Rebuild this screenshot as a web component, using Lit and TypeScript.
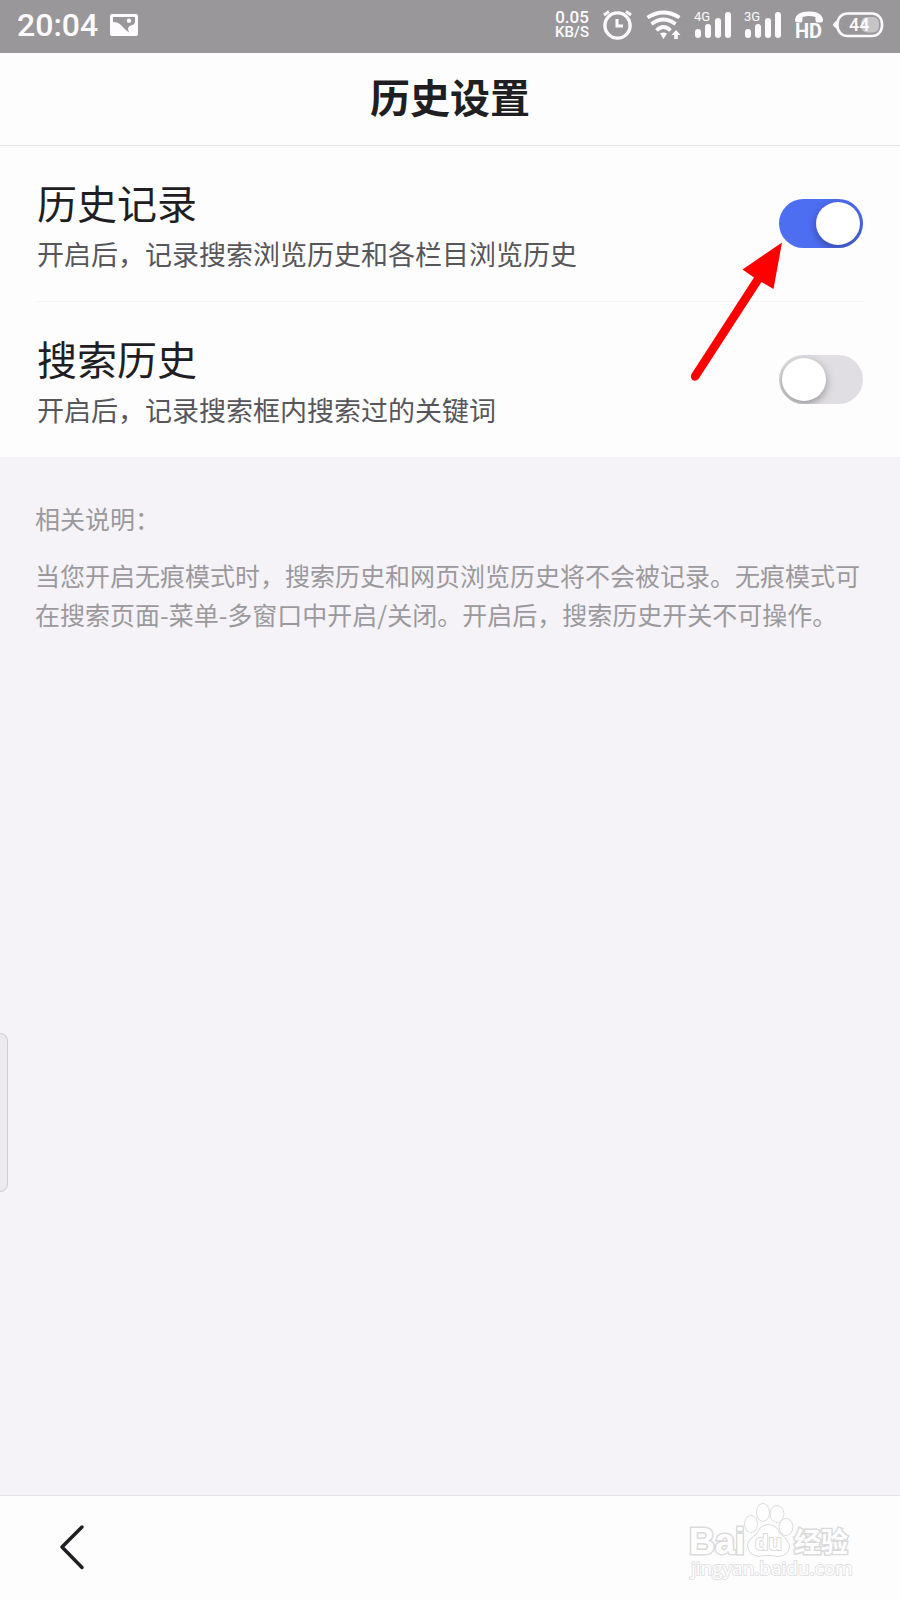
import { LitElement, html, svg, css } from "lit";
import { customElement, property, state } from "lit/decorators.js";

@customElement("status-bar")
class StatusBar extends LitElement {
  static styles = css`
    :host {
      display: flex;
      align-items: center;
      justify-content: space-between;
      height: 53px;
      box-sizing: border-box;
      padding: 0 16px 3px 17px;
      background: #9a979a;
      color: #fdfbfe;
      font-family: Roboto, sans-serif;
      font-weight: 500;
    }
    .group {
      display: flex;
      align-items: center;
      gap: 14px;
    }
    .left {
      gap: 12px;
    }
    .time {
      font-size: 32px;
      line-height: 50px;
    }
    .speed {
      display: flex;
      flex-direction: column;
      text-align: center;
      font-size: 17px;
      line-height: 15px;
    }
    .unit {
      font-size: 15px;
    }
    svg {
      display: block;
      overflow: visible;
      fill: currentColor;
    }
    .line {
      fill: none;
      stroke: currentColor;
    }
    .battery {
      margin-left: -4px;
    }
    .net {
      font-size: 13px;
      font-weight: 400;
    }
    .hd {
      font-size: 20px;
      font-weight: 700;
    }
    .level {
      font-size: 18px;
    }
  `;

  private signal(kind: string) {
    return html`<svg width="36" height="30" viewBox="0 0 36 30" role="img" aria-label=${kind}>
      ${svg`<text class="net" x="-1" y="11">${kind}</text>
      <rect x="0" y="19" width="6" height="9" rx="3"></rect>
      <rect x="10" y="14" width="6" height="14" rx="3"></rect>
      <rect x="20" y="8" width="6" height="20" rx="3"></rect>
      <rect x="30" y="2" width="6" height="26" rx="3"></rect>`}
    </svg>`;
  }

  render() {
    return html`
      <div class="group left">
        <span class="time">20:04</span>
        <svg width="28" height="22" viewBox="0 0 28 22" aria-hidden="true">
          <path
            fill-rule="evenodd"
            d="M2 0H26Q28 0 28 2V20Q28 22 26 22H2Q0 22 0 20V2Q0 0 2 0ZM3 3V8Q8 8 11 11Q14 15 19 18.500L18 15Q18 12.500 21 11.500Q24.500 10.500 25 8V3ZM19 4.500A2.200 2.200 0 1 1 19 8.900A2.200 2.200 0 1 1 19 4.500Z"
          ></path>
        </svg>
      </div>
      <div class="group">
        <span class="speed"><span>0.05</span><span class="unit">KB/S</span></span>
        <svg width="29" height="30" viewBox="0 0 29 30" aria-hidden="true">
          <circle class="line" cx="14.500" cy="15.500" r="12.600" stroke-width="3.400"></circle>
          <path class="line" stroke-width="3" d="M14 9V16H20M1 5L6 1.500M28 5L23 1.500"></path>
        </svg>
        <svg width="35" height="30" viewBox="0 0 35 30" aria-hidden="true">
          <path
            class="line"
            stroke-width="3.800"
            d="M1.500 7.500Q17.500 -2.500 33.500 7.500M5.500 14Q17.500 5 29.500 14M10.500 20.500Q17.500 13.500 24.500 20.500"
          ></path>
          <path d="M14 23.500Q17.500 21.500 21 23.500L17.500 29ZM30 20L34.500 25H31.800V29H28.200V25H25.500Z"></path>
        </svg>
        ${this.signal("4G")} ${this.signal("3G")}
        <svg width="28" height="30" viewBox="0 0 28 30" role="img" aria-label="HD">
          <path
            d="M0 10Q1 1.500 14 1.500Q27 1.500 28 10Q28 12.500 25.500 12.500H22.500Q20.500 12.500 20.500 10V7Q14 5 7.500 7V10Q7.500 12.500 5.500 12.500H2.500Q0 12.500 0 10Z"
          ></path>
          <text class="hd" x="0" y="28">HD</text>
        </svg>
        <svg class="battery" width="51" height="30" viewBox="0 0 51 30" role="img" aria-label="44%">
          <rect class="line" x="4.500" y="3.500" width="44.500" height="22.500" rx="10" stroke-width="2.600"></rect>
          <path d="M4.500 10Q0 13 0 14.700Q0 16.500 4.500 19Z"></path>
          <rect x="28" y="7" width="18" height="15.500" rx="6" opacity="0.450"></rect>
          <text class="level" x="16" y="21">44</text>
        </svg>
      </div>
    `;
  }
}

@customElement("setting-row")
class SettingRow extends LitElement {
  @property() heading = "";
  @property() detail = "";
  @property({ type: Boolean }) on = false;

  static styles = css`
    :host {
      display: flex;
      align-items: center;
      justify-content: space-between;
      gap: 24px;
      padding: 25px 0 26px;
    }
    .heading {
      display: block;
      font-size: 40px;
      line-height: 62px;
      color: #1f1e22;
    }
    .detail {
      margin: 0;
      font-size: 27px;
      line-height: 42px;
      color: #57565a;
    }
    .switch {
      appearance: none;
      flex: none;
      width: 84px;
      height: 49px;
      margin: 0;
      padding: 3px;
      border-radius: 25px;
      box-sizing: border-box;
      background: #e0dee2;
      overflow: hidden;
      cursor: pointer;
    }
    .switch::before {
      content: "";
      display: block;
      width: 44px;
      height: 43px;
      border-radius: 50%;
      background: #fff;
      box-shadow: 0 3px 8px rgba(0, 0, 0, 0.35);
    }
    .switch:checked {
      background: #4e6ef2;
    }
    .switch:checked::before {
      margin-left: auto;
    }
  `;

  render() {
    return html`
      <div>
        <label class="heading" for="switch">${this.heading}</label>
        <p class="detail" id="detail">${this.detail}</p>
      </div>
      <input
        class="switch"
        id="switch"
        type="checkbox"
        role="switch"
        aria-describedby="detail"
        .checked=${this.on}
        @change=${(e: Event) => (this.on = (e.target as HTMLInputElement).checked)}
      />
    `;
  }
}

@customElement("app-root")
class AppRoot extends LitElement {
  @state() private rows = [
    { heading: "历史记录", detail: "开启后，记录搜索浏览历史和各栏目浏览历史", on: true },
    { heading: "搜索历史", detail: "开启后，记录搜索框内搜索过的关键词", on: false },
  ];

  static styles = css`
    :host {
      display: flex;
      flex-direction: column;
      position: relative;
      min-height: 100vh;
      background: #f5f3f7;
      font-family: "Noto Sans CJK SC", sans-serif;
    }
    .header {
      padding: 13px 0 19px;
      background: #fefdfe;
      border-bottom: 1px solid #e4e3e6;
      text-align: center;
    }
    .title {
      margin: 0;
      font-size: 40px;
      line-height: 60px;
      font-weight: 700;
      color: #1f1e22;
    }
    .settings {
      position: relative;
      padding: 0 37px;
      background: #fefdfe;
    }
    setting-row + setting-row {
      border-top: 1px solid #f3f2f5;
    }
    .arrow {
      position: absolute;
      top: 94px;
      right: 116px;
      pointer-events: none;
    }
    .notes {
      flex: 1;
      padding: 42px 35px;
      font-size: 25px;
      line-height: 39px;
      color: #9b999d;
    }
    .notes p {
      margin: 0 0 18px;
    }
    .handle {
      position: absolute;
      left: 0;
      top: 1033px;
      width: 8px;
      height: 159px;
      box-sizing: border-box;
      border: 1px solid #cfcdd1;
      border-left: 0;
      border-radius: 0 8px 8px 0;
      background: #ebeaed;
    }
    .footer {
      display: flex;
      align-items: center;
      justify-content: space-between;
      height: 104px;
      padding: 0 46px 0 48px;
      border-top: 1px solid #e4e3e6;
      background: #fefdfe;
    }
    .back {
      display: block;
      padding: 8px;
      border: 0;
      background: none;
      cursor: pointer;
    }
    svg {
      display: block;
    }
    .mark {
      fill: #fff;
      stroke: #dad9db;
      stroke-width: 1.8px;
      paint-order: stroke;
    }
    .latin {
      font: 700 36px "Liberation Sans", sans-serif;
      stroke-width: 3px;
    }
    .du {
      font: 700 22px "Liberation Sans", sans-serif;
      stroke-width: 2px;
    }
    .cjk {
      font: 700 27px "Noto Sans CJK SC", sans-serif;
      stroke-width: 3px;
    }
    .site {
      font: 400 19px "Open Sans", sans-serif;
      stroke-width: 2px;
      stroke: #e2e1e3;
    }
  `;

  render() {
    return html`
      <status-bar></status-bar>
      <header class="header"><h1 class="title">历史设置</h1></header>
      <section class="settings">
        ${this.rows.map(
          (r) => html`<setting-row .heading=${r.heading} .detail=${r.detail} .on=${r.on}></setting-row>`
        )}
        <svg class="arrow" width="96" height="144" viewBox="0 0 96 144" aria-hidden="true">
          <path
            fill="#ff0000"
            d="M94 2.500L85.500 49L73.500 42L10.500 139Q7.500 142 4.500 140Q2 138 3.500 134L66 37.500L54.500 29.500Z"
          ></path>
        </svg>
      </section>
      <section class="notes">
        <p>相关说明：</p>
        <p>当您开启无痕模式时，搜索历史和网页浏览历史将不会被记录。无痕模式可在搜索页面-菜单-多窗口中开启/关闭。开启后，搜索历史开关不可操作。</p>
      </section>
      <div class="handle"></div>
      <footer class="footer">
        <button class="back" aria-label="返回">
          <svg width="32" height="48" viewBox="0 0 32 48">
            <path
              d="M26 3L6 23L26 43.500"
              fill="none"
              stroke="#1f1e22"
              stroke-width="3.500"
              stroke-linecap="round"
              stroke-linejoin="round"
            ></path>
          </svg>
        </button>
        <svg width="166" height="104" viewBox="0 0 166 104" role="img" aria-label="Baidu 经验 jingyan.baidu.com">
          <g class="mark">
            <ellipse cx="63" cy="28" rx="6" ry="8"></ellipse>
            <ellipse cx="75" cy="16.500" rx="6" ry="8.500"></ellipse>
            <ellipse cx="89" cy="18" rx="6.500" ry="8"></ellipse>
            <ellipse cx="98" cy="31" rx="6.500" ry="8"></ellipse>
            <path
              d="M80 29Q88 29 91 37Q101 45 101 51Q100 60 89 60Q80 58 71 60Q61 59 60 50Q60 44 69 38Q73 29 80 29Z"
            ></path>
            <text class="latin" x="1" y="58">Bai</text>
            <text class="du" x="67" y="54">du</text>
            <text class="cjk" x="106" y="56">经验</text>
            <text class="site" x="3" y="79">jingyan.baidu.com</text>
          </g>
        </svg>
      </footer>
    `;
  }
}
